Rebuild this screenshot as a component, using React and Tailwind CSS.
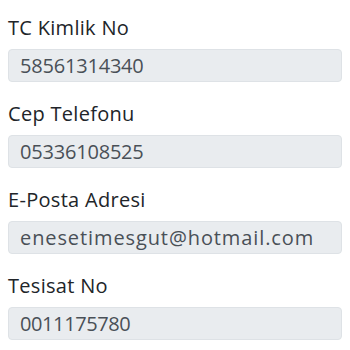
export default function App() {
  const fields = [
    { label: "TC Kimlik No", value: "58561314340", vcls: "tracking-[-0.2px]" },
    { label: "Cep Telefonu", value: "05336108525", vcls: "tracking-[-0.2px]" },
    { label: "E-Posta Adresi", value: "enesetimesgut@hotmail.com", vcls: "tracking-[0.9px]" },
    { label: "Tesisat No", value: "0011175780", vcls: "tracking-[-0.4px]" },
  ];
  return (
    <div className="w-[350px] h-[350px] bg-white px-2 pt-[13px] overflow-hidden" style={{ fontFamily: '"Open Sans", sans-serif' }}>
      {fields.map((f) => (
        <div key={f.label} className="mb-[17px]">
          <div className="text-[20px] leading-[30px] text-[#212529] mb-[6px] tracking-[0.3px]">{f.label}</div>
          <div className={"h-[33px] flex items-center bg-[#e9ecef] border border-[#dee2e6] rounded-[4px] pl-[11px] text-[20px] text-[#495057] " + f.vcls}>
            {f.value}
          </div>
        </div>
      ))}
    </div>
  );
}
